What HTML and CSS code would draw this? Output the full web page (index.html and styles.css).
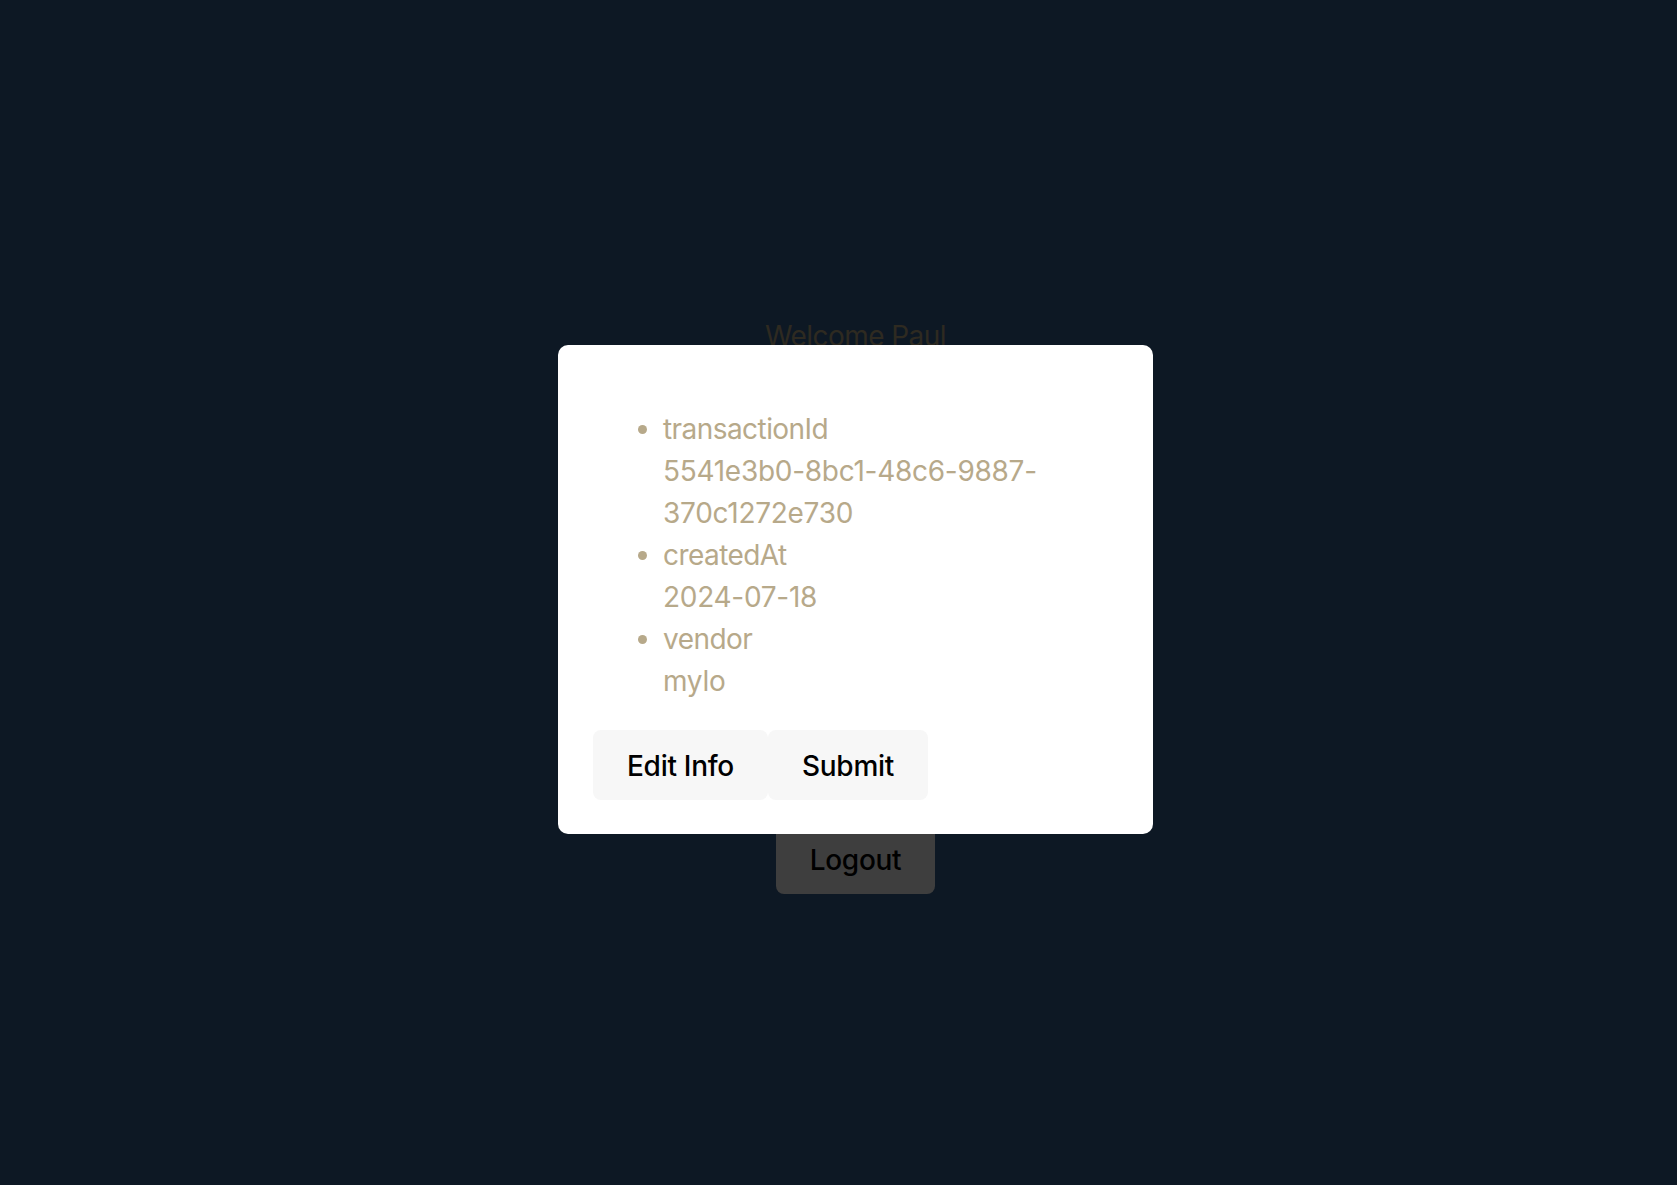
FILE: index.html
```html
<!DOCTYPE html>
<html lang="en">
<head>
<meta charset="utf-8">
<title>Transactions</title>
<link rel="stylesheet" href="styles.css">
</head>
<body>
<div class="page">
  <div class="welcome">Welcome Paul</div>
  <button class="btn btn-logout">Logout</button>
</div>
<div class="overlay">
  <div class="modal">
    <ul class="fields">
      <li><span class="key">transactionId</span><span class="val">5541e3b0-8bc1-48c6-9887-370c1272e730</span></li>
      <li><span class="key">createdAt</span><span class="val">2024-07-18</span></li>
      <li><span class="key">vendor</span><span class="val">mylo</span></li>
    </ul>
    <div class="actions">
      <button class="btn btn-light">Edit Info</button>
      <button class="btn btn-light">Submit</button>
    </div>
  </div>
</div>
</body>
</html>
```
FILE: styles.css
```css
html, body {
  margin: 0;
  padding: 0;
  background: #0d1824;
  font-family: Inter, "Liberation Sans", sans-serif;
  font-size: 28px;
  line-height: 1.5;
}
.page {
  min-height: 1185px;
  box-sizing: border-box;
  padding-top: 315px;
  padding-left: 34px;
  display: flex;
  flex-direction: column;
  align-items: center;
}
.welcome {
  color: #2e2a21;
  height: 42px;
  letter-spacing: -0.02em;
}
.btn {
  font-family: inherit;
  font-size: 28px;
  font-weight: 500;
  line-height: 1.2;
  padding: 19px 33px 15px;
  border: 1px solid transparent;
  border-radius: 8px;
  color: #000;
  letter-spacing: -0.01em;
  cursor: pointer;
}
.btn-logout {
  margin-top: 467px;
  background: #3e3e3e;
}
.overlay {
  position: fixed;
  inset: 0;
  display: flex;
  align-items: center;
  justify-content: center;
  padding-left: 34px;
  padding-bottom: 6px;
  box-sizing: border-box;
}
.modal {
  width: 595px;
  box-sizing: border-box;
  background: #ffffff;
  border-radius: 10px;
  padding: 35px 36px 34px 35px;
}
.fields {
  margin: 28px 0;
  padding-left: 70px;
  color: #b7a98a;
  letter-spacing: -0.02em;
}
.fields li span {
  display: block;
}
.fields li .val {
  letter-spacing: -0.01em;
}
.actions {
  display: flex;
}
.btn-light {
  background: #f7f7f7;
}
```
